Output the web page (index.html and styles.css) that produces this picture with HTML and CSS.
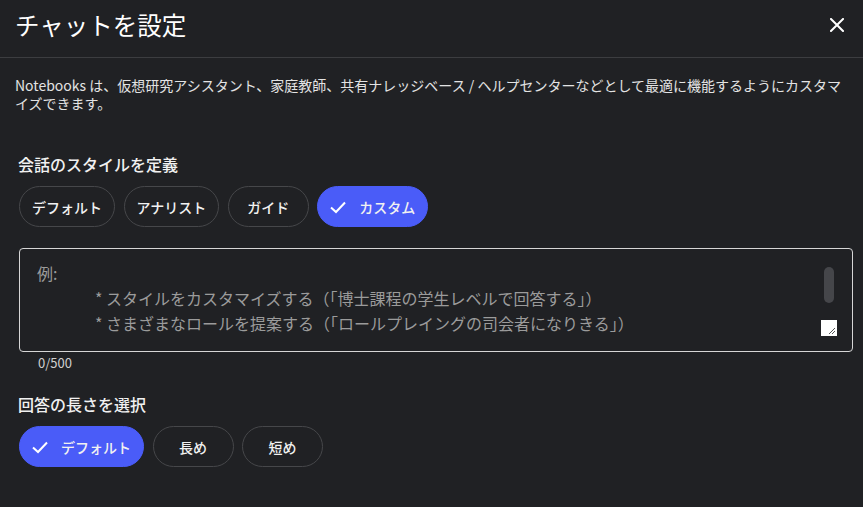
FILE: index.html
```html
<!DOCTYPE html>
<html lang="ja">
<head>
<meta charset="utf-8">
<link rel="stylesheet" href="styles.css">
</head>
<body>
<div class="dialog">
  <header class="dialog-header">
    <h1 class="title">チャットを設定</h1>
    <button class="close" aria-label="閉じる">
      <svg width="14" height="14" viewBox="0 0 14 14"><path d="M1 1L13 13M13 1L1 13" stroke="#fff" stroke-width="2" stroke-linecap="square"/></svg>
    </button>
  </header>
  <p class="desc">Notebooks は、仮想研究アシスタント、家庭教師、共有ナレッジベース / ヘルプセンターなどとして最適に機能するようにカスタマイズできます。</p>

  <section class="section">
    <h2 class="label">会話のスタイルを定義</h2>
    <div class="chips">
      <button class="chip">デフォルト</button>
      <button class="chip">アナリスト</button>
      <button class="chip">ガイド</button>
      <button class="chip selected"><svg class="check" width="18" height="18" viewBox="0 0 18 18"><path d="M2 9.5L7 14L16 4.5" fill="none" stroke="#fff" stroke-width="2"/></svg>カスタム</button>
    </div>
    <div class="textbox">
      <div class="ph">例:</div>
      <div class="ph indent">* スタイルをカスタマイズする（「博士課程の学生レベルで回答する」）</div>
      <div class="ph indent">* さまざまなロールを提案する（「ロールプレイングの司会者になりきる」）</div>
      <div class="thumb"></div>
      <div class="resizer"><svg width="16" height="16" viewBox="0 0 16 16"><path d="M14 8L8 14M14 11L11 14" stroke="#555" stroke-width="1"/></svg></div>
    </div>
    <div class="counter">0/500</div>
  </section>

  <section class="section second">
    <h2 class="label">回答の長さを選択</h2>
    <div class="chips">
      <button class="chip selected"><svg class="check" width="18" height="18" viewBox="0 0 18 18"><path d="M2 9.5L7 14L16 4.5" fill="none" stroke="#fff" stroke-width="2"/></svg>デフォルト</button>
      <button class="chip">長め</button>
      <button class="chip">短め</button>
    </div>
  </section>
</div>
</body>
</html>
```

FILE: styles.css
```css
* { box-sizing: border-box; }
html, body {
  margin: 0;
  padding: 0;
  background: #202124;
  color: #e8eaed;
  font-family: "Noto Sans CJK JP", "Noto Sans", sans-serif;
}
.dialog {
  width: 863px;
  height: 507px;
  overflow: hidden;
}
.dialog-header {
  height: 58px;
  display: flex;
  align-items: center;
  justify-content: space-between;
  padding: 0 16px 0 15px;
  border-bottom: 1px solid #3c3d40;
}
.title {
  margin: 0;
  font-size: 24.5px;
  font-weight: 400;
  color: #fff;
  line-height: 30px;
  margin-top: -8px;
}
.close {
  background: none;
  border: 0;
  padding: 0;
  width: 20px;
  height: 20px;
  display: flex;
  align-items: center;
  justify-content: center;
  margin-top: -8px;
}
.desc {
  margin: 0;
  padding: 18px 15px 0 15px;
  font-size: 14px;
  line-height: 18px;
  color: #e3e3e3;
}
.section {
  padding: 0 10px 0 19px;
}
.label {
  margin: 41px 0 0 -1px;
  font-size: 16px;
  font-weight: 500;
  line-height: 22px;
  color: #f1f1f1;
}
.second .label { margin-top: 22px; }
.chips {
  display: flex;
  gap: 8.5px;
  margin-top: 11px;
}
.chip {
  height: 41px;
  min-width: 81px;
  padding: 0 12px;
  border: 1px solid #46474a;
  border-radius: 21px;
  background: transparent;
  color: #f1f1f1;
  font-family: inherit;
  font-size: 14px;
  font-weight: 500;
  display: flex;
  align-items: center;
  justify-content: center;
}
.chip.selected {
  background: #4a5cf8;
  border-color: #4a5cf8;
  padding: 0 12px 0 11px;
}
.check {
  margin-right: 12px;
}
.textbox {
  position: relative;
  margin-top: 21px;
  height: 104px;
  border: 1px solid #d6d6d6;
  border-radius: 4px;
  padding: 12px 0 0 17px;
}
.ph {
  font-size: 16px;
  line-height: 25px;
  color: #9b9b9b;
}
.indent { padding-left: 58px; }
.thumb {
  position: absolute;
  right: 18px;
  top: 18px;
  width: 10px;
  height: 36px;
  border-radius: 5px;
  background: #45464a;
}
.resizer {
  position: absolute;
  right: 15px;
  top: 71px;
  width: 16px;
  height: 16px;
  background: #fff;
}
.resizer svg { display: block; }
.counter {
  margin-top: 3px;
  padding-left: 19px;
  font-size: 13px;
  line-height: 16px;
  color: #d0d0d0;
}
```
